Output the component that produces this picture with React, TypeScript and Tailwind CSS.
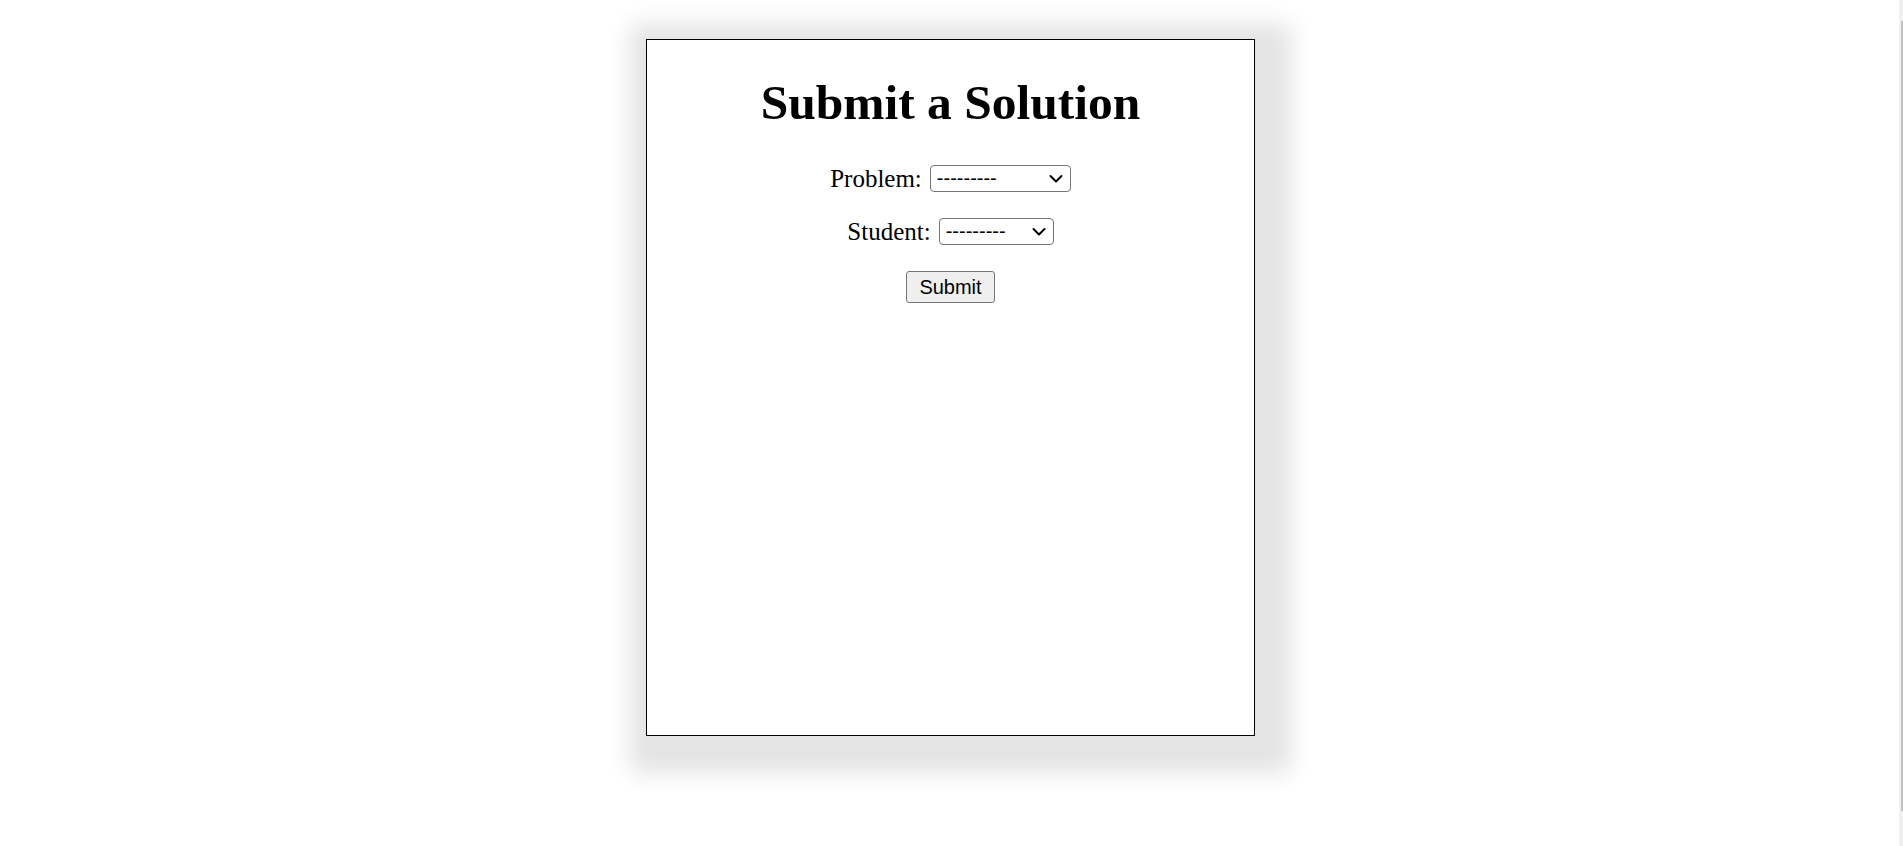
import React from "react";

function Chevron() {
  return (
    <svg
      className="pointer-events-none absolute right-[8px] top-1/2 -translate-y-1/2"
      width="14"
      height="9"
      viewBox="0 0 14 9"
      fill="none"
    >
      <polyline points="1.5,1.5 7,7 12.5,1.5" stroke="#000" strokeWidth="2" strokeLinecap="round" strokeLinejoin="round" />
    </svg>
  );
}

function Select({ width }: { width: string }) {
  return (
    <span className={`relative inline-block ${width}`}>
      <select
        className="block h-[27px] w-full appearance-none rounded-[4px] border border-[#767676] bg-white pl-[6px] text-[20px] leading-[25px] text-black"
        style={{ fontFamily: '"Liberation Sans", Arial, sans-serif' }}
        defaultValue=""
      >
        <option value="">---------</option>
      </select>
      <Chevron />
    </span>
  );
}

export default function App() {
  return (
    <div className="min-h-[846px] w-full bg-white pr-[2px] pt-[39px]" style={{ fontFamily: '"Liberation Serif", "Times New Roman", serif' }}>
      <div className="mx-auto flex h-[697px] w-[609px] flex-col items-center border border-black bg-white shadow-[10px_11px_22px_26px_#e4e4e4]">
        <h1 className="mt-[38px] text-[49.5px] font-bold leading-[50px] text-black">Submit a Solution</h1>
        <div className="mt-[37px] flex h-[27px] items-center gap-[8px]">
          <span className="text-[25px] leading-[27px] text-black">Problem:</span>
          <Select width="w-[141px]" />
        </div>
        <div className="mt-[26px] flex h-[27px] items-center gap-[8px]">
          <span className="text-[25px] leading-[27px] text-black">Student:</span>
          <Select width="w-[115px]" />
        </div>
        <button
          className="mt-[26px] h-[32px] rounded-[3px] border border-[#767676] bg-[#efefef] px-[12px] text-[20px] leading-[28px] text-black"
          style={{ fontFamily: '"Liberation Sans", Arial, sans-serif' }}
        >
          Submit
        </button>
      </div>
      <div className="fixed right-0 top-0 h-full w-[4px] bg-[#f0f0f0]">
        <div className="ml-[2px] mt-[21px] h-[790px] w-[2px] bg-[#c1c1c1]" />
      </div>
    </div>
  );
}
